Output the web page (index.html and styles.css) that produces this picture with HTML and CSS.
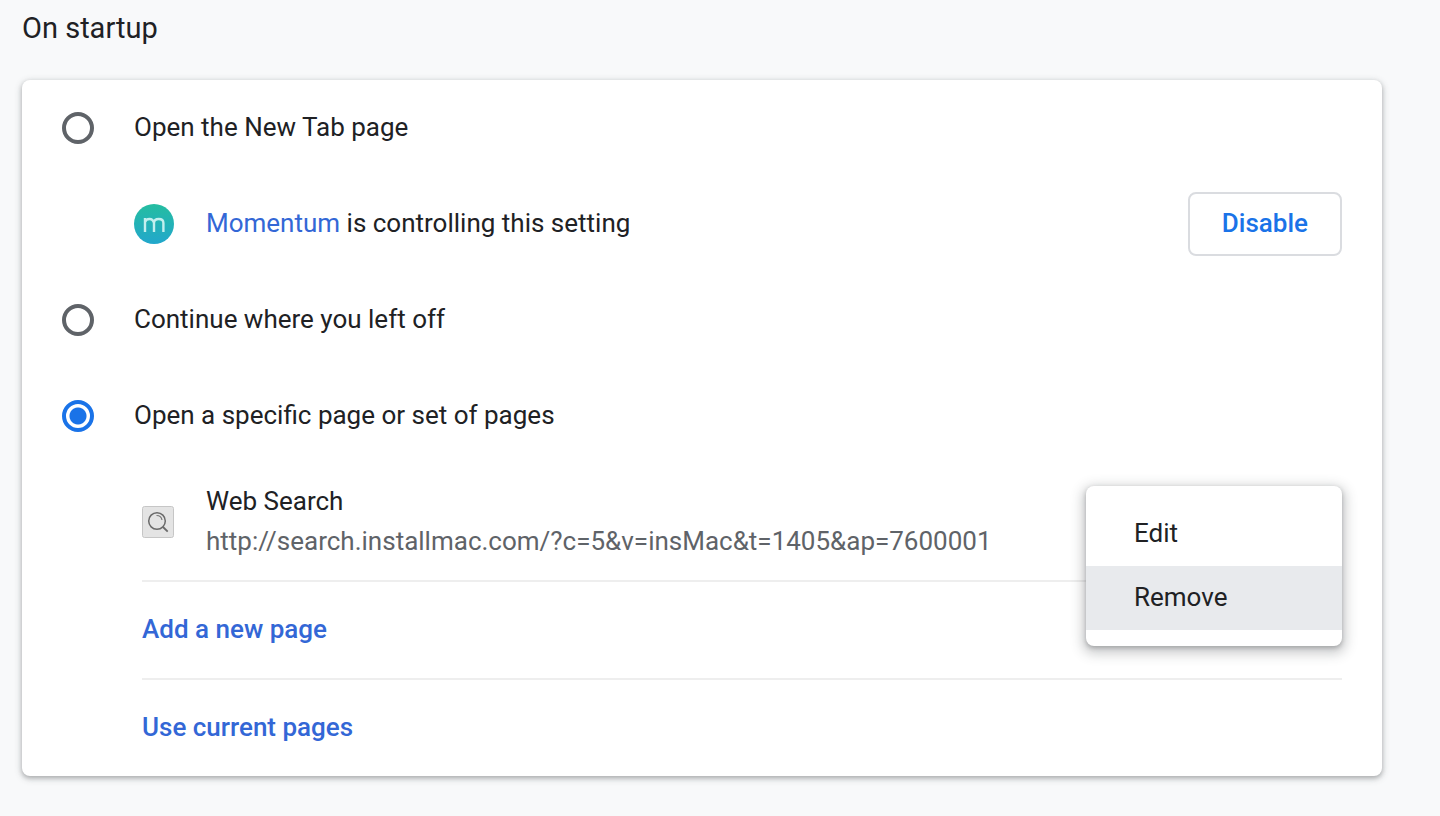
FILE: index.html
```html
<!DOCTYPE html>
<html lang="en">
<head>
<meta charset="utf-8">
<title>Settings - On startup</title>
<link rel="stylesheet" href="styles.css">
</head>
<body>
<main class="page">
  <h1 class="section-title">On startup</h1>
  <section class="card">
    <label class="option"><input class="radio" type="radio" name="startup"><span class="option-text">Open the New Tab page</span></label>
    <div class="controlled">
      <svg class="momentum" viewBox="0 0 40 40" aria-hidden="true">
        <defs><linearGradient id="teal" x1="0" y1="0" x2="0" y2="1"><stop offset="0" stop-color="#25bda0"/><stop offset="1" stop-color="#22a7cc"/></linearGradient></defs>
        <circle cx="20" cy="20" r="20" fill="url(#teal)"/>
        <path d="M11 28V14M11 18q1-3 4.500-3t4.500 4v9M20 19q0-4 4.700-4t4.700 4v9" fill="none" stroke="#c4efee" stroke-width="2.400"/>
      </svg>
      <p class="controlled-text"><a class="link" href="#">Momentum</a> is controlling this setting</p>
      <button class="disable" type="button">Disable</button>
    </div>
    <label class="option"><input class="radio" type="radio" name="startup"><span class="option-text">Continue where you left off</span></label>
    <label class="option"><input class="radio" type="radio" name="startup" checked><span class="option-text">Open a specific page or set of pages</span></label>
    <div class="pages">
      <div class="site">
        <svg class="favicon" viewBox="0 0 32 32" aria-hidden="true">
          <rect x=".5" y=".5" width="31" height="31" rx="2" fill="#e4e4e4" stroke="#c6c6c6"/>
          <circle cx="15" cy="15" r="8.300" fill="none" stroke="#6a6a6a" stroke-width="1.500"/>
          <path d="M21 21l4.700 4.700" stroke="#6a6a6a" stroke-width="1.800"/>
          <path d="M14.500 9.500a5.500 5.500 0 0 1 5.500 4.500" fill="none" stroke="#777" stroke-width="1.200"/>
        </svg>
        <div class="site-text"><div>Web Search</div><div class="url">http://search.installmac.com/?c=5&amp;v=insMac&amp;t=1405&amp;ap=7600001</div></div>
        <div class="menu" role="menu">
          <button class="menu-item" type="button" role="menuitem">Edit</button>
          <button class="menu-item active" type="button" role="menuitem">Remove</button>
        </div>
      </div>
      <button class="action" type="button">Add a new page</button>
      <button class="action" type="button">Use current pages</button>
    </div>
  </section>
</main>
</body>
</html>
```
FILE: styles.css
```css
* { box-sizing: border-box; }
body { margin: 0; background: #f8f9fa; color: #202124; font: 26px/40px Roboto, sans-serif; }
button { font: inherit; color: inherit; border: 0; background: none; cursor: pointer; }
.page { padding: 8px 58px 40px 22px; }
.section-title { margin: 0 0 32px; font-size: 29px; font-weight: 400; line-height: 40px; }
.card { padding: 0 40px; background: #fff; border-radius: 8px; box-shadow: 0 2px 4px rgba(60, 64, 67, .3), 0 2px 6px 2px rgba(60, 64, 67, .15); }
.option { display: flex; align-items: center; gap: 40px; height: 96px; }
.option-text, .controlled-text, .site-text { padding-bottom: 2px; }
.radio { appearance: none; flex: none; width: 32px; height: 32px; margin: 0; border: 4px solid #5f6368; border-radius: 50%; }
.radio:checked { border-color: #1a73e8; background: radial-gradient(circle, #1a73e8 8px, transparent 9px); }
.controlled { display: flex; align-items: center; height: 96px; padding-left: 72px; }
.momentum { width: 40px; height: 40px; margin-right: 32px; }
.controlled-text { flex: 1; margin: 0; }
.link { color: #3367d6; text-decoration: none; }
.disable { height: 64px; padding: 0 32px 2px; border: 2px solid #dadce0; border-radius: 8px; color: #1a73e8; font-weight: 500; }
.pages { padding-left: 80px; }
.site { position: relative; display: flex; align-items: center; gap: 32px; height: 116px; }
.favicon { width: 32px; height: 32px; }
.url { color: #5f6368; }
.menu { position: absolute; top: 22px; right: 0; width: 256px; padding: 16px 0; background: #fff; border-radius: 8px; box-shadow: 0 2px 4px rgba(60, 64, 67, .3), 0 4px 12px 4px rgba(60, 64, 67, .25); }
.menu-item { display: block; width: 100%; height: 64px; padding: 0 48px 2px; text-align: left; }
.active { background: #e8eaed; }
.action { display: block; width: 100%; height: 98px; padding: 0 0 2px; border-top: 2px solid #eee; color: #3367d6; font-weight: 500; text-align: left; }
```
